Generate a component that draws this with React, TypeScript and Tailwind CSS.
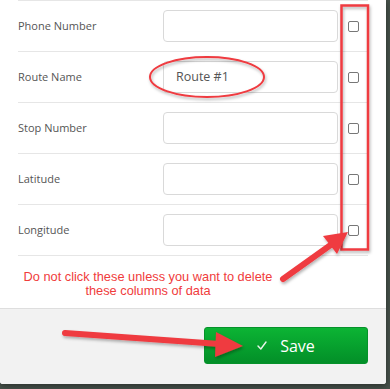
import React from "react";

const fields = [
	{ label: "Phone Number", value: "" },
	{ label: "Route Name", value: "Route #1" },
	{ label: "Stop Number", value: "" },
	{ label: "Latitude", value: "" },
	{ label: "Longitude", value: "" },
];

const FieldRow: React.FC<{ label: string; value: string }> = ({ label, value }) => (
	<div className="flex items-center h-[51px] border-t border-[#e6e6e6]">
		<label className="w-[145px] text-[11px] text-[#555]">{label}</label>
		<div className="w-[175px] h-[32px] rounded-[4px] border border-[#d9d9d9] bg-white flex items-center px-[12px] text-[12.5px] text-[#555]">
			{value}
		</div>
		<div className="flex-1 flex justify-center">
			<span className="block w-[11px] h-[11px] rounded-[2px] border border-[#777] bg-white" />
		</div>
	</div>
);

// red markup drawn on top of the screenshot
const Annotations: React.FC = () => (
	<svg
		className="absolute inset-0 pointer-events-none"
		width="390"
		height="389"
		viewBox="0 0 390 389"
	>
		<defs>
			<filter id="sh" x="-20%" y="-20%" width="140%" height="140%">
				<feDropShadow dx="1" dy="2" stdDeviation="1.5" floodColor="#000" floodOpacity="0.3" />
			</filter>
		</defs>
		<g filter="url(#sh)" fill="none" stroke="#ef3b40">
			<ellipse cx="207" cy="77" rx="57" ry="20" strokeWidth="2" />
			<rect x="341.5" y="5.5" width="26.5" height="244" strokeWidth="2.5" />
		</g>
		<g filter="url(#sh)">
			<line x1="283" y1="279" x2="332" y2="244" stroke="#ef3b40" strokeWidth="6" strokeLinecap="round" />
			<polygon points="348,232 337,254 323,236" fill="#ef3b40" />
			<line x1="65" y1="333" x2="220" y2="344" stroke="#ef3b40" strokeWidth="6" strokeLinecap="round" />
			<polygon points="243,346 216,332 215,357" fill="#ef3b40" />
		</g>
	</svg>
);

export default function App() {
	return (
		<div className="relative w-[390px] h-[389px] bg-[#46514a] overflow-hidden font-['Open_Sans','Liberation_Sans',sans-serif]">
			<div className="w-[386px] h-[384px] bg-white flex flex-col rounded-b-[3px] overflow-hidden shadow-[0_2px_6px_rgba(0,0,0,0.4)]">
				<div className="px-[18px]">
					{fields.map((f) => (
						<FieldRow key={f.label} label={f.label} value={f.value} />
					))}
					<div className="border-t border-[#e6e6e6]" />
				</div>
				<div className="flex-1 pt-[14px]">
					<p className="ml-[18px] w-[260px] text-center text-[12.8px] leading-[14px] text-[#f03c3c] font-['Liberation_Sans',Arial,sans-serif]">
						Do not click these unless you want to delete these columns of data
					</p>
				</div>
				<div className="h-[76px] bg-[#f2f2f2] border-t border-[#dedede] flex justify-end items-start pt-[18px] pr-[18px]">
					<button className="w-[164px] h-[37px] rounded-[3px] bg-gradient-to-b from-[#0cb434] to-[#038f28] border border-[#06922a] text-white flex items-center justify-center gap-[13px]">
						<svg width="10" height="9" viewBox="0 0 10 9" fill="none">
							<path d="M1 5 L3.8 8 L9 1" stroke="#e8f5ea" strokeWidth="1.4" strokeLinecap="round" strokeLinejoin="round" />
						</svg>
						<span className="text-[16px]">Save</span>
					</button>
				</div>
			</div>
			<Annotations />
		</div>
	);
}
